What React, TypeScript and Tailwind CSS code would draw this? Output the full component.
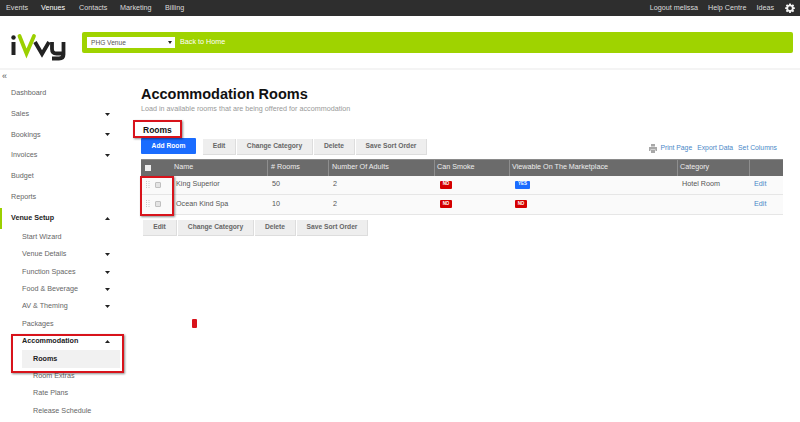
import React from "react";

const Caret = ({ up, small }: { up?: boolean; small?: boolean }) => (
  <svg width={small ? 4 : 5} height={small ? 3 : 3} viewBox="0 0 6 4" preserveAspectRatio="none" className="shrink-0">
    <path d={up ? "M0 4L3 0L6 4Z" : "M0 0L6 0L3 4Z"} fill="#222" />
  </svg>
);

const Gear = () => (
  <svg width="10" height="10" viewBox="0 0 24 24" fill="#f2f2f2">
    <path fillRule="evenodd" d="M10 1h4l.6 3.1 1.8.8L19 3l3 3-1.9 2.6.8 1.8L24 11v3l-3.1.6-.8 1.8L22 19l-3 3-2.6-1.9-1.8.8L14 24h-4l-.6-3.1-1.8-.8L5 22l-3-3 1.9-2.6-.8-1.8L0 14v-3l3.1-.6.8-1.8L2 6l3-3 2.6 1.9 1.8-.8L10 1zm2 7a4.5 4.5 0 1 0 0 9 4.5 4.5 0 0 0 0-9z" />
  </svg>
);

const Logo = () => (
  <svg width="58" height="28" viewBox="0 0 58 28" className="shrink-0">
    <circle cx="2.5" cy="4.5" r="2.2" fill="#222" />
    <path d="M2.5 9V22" stroke="#222" strokeWidth="4" fill="none" />
    <path d="M8.5 3L15.5 20.5L23 3" stroke="#9bd000" strokeWidth="3.8" strokeLinecap="round" fill="none" />
    <path d="M24 9L31 21L38 9" stroke="#222" strokeWidth="3.8" fill="none" />
    <path d="M41 9V16Q41 20.5 45.5 20.5H52.5M52.5 9V21.5Q52.5 25.5 48 25.5H41" stroke="#222" strokeWidth="3.8" fill="none" />
  </svg>
);

const NavRow = ({
  label, h, indent, bold, caret, activeBar, selected,
}: {
  label: string; h: string; indent: string; bold?: boolean; caret?: "up" | "down"; activeBar?: boolean; selected?: boolean;
}) => (
  <div className={`flex items-center ${h} ${indent} relative`}>
    {activeBar && <div className="absolute left-0 top-0 bottom-0 w-[2px] bg-[#9bd000]" />}
    <div className={`flex flex-1 items-center h-full ${selected ? "bg-[#f1f1f1] -ml-[11px] pl-[11px] mr-[21px]" : ""}`}>
      <span className={`flex-1 ${bold ? "font-bold text-[#222]" : "text-[#666]"}`}>{label}</span>
      {caret && <span className="flex mr-[31px]"><Caret up={caret === "up"} /></span>}
    </div>
  </div>
);

const Btn = ({ label, w }: { label: string; w: string }) => (
  <button className={`${w} h-[16px] bg-[#eeeeee] border-b border-r border-[#dddddd] text-[6.7px] font-bold text-[#666] flex items-center justify-center`}>{label}</button>
);

const Badge = ({ yes }: { yes?: boolean }) => (
  <span className={`inline-flex items-center justify-center h-[8px] rounded-[1px] text-white font-bold text-[4.5px] ${yes ? "w-[15px] bg-[#1a6cff]" : "w-[12px] bg-[#d40000]"}`}>{yes ? "YES" : "NO"}</span>
);

const Check = () => (
  <span className="block w-[6px] h-[6px] rounded-[1px] border border-[#c0c0c0] bg-[#e4e4e4]" />
);

const Grip = () => (
  <svg width="4" height="8" viewBox="0 0 4 8" fill="#c8c8c8">
    {[0, 2, 4, 6].map((y) => (
      <g key={y}><rect x="0" y={y} width="1" height="1" /><rect x="2.5" y={y} width="1" height="1" /></g>
    ))}
  </svg>
);

const cols = "grid grid-cols-[32px_94px_61px_106px_75px_168px_72px_33px]";

const Row = ({ name, n, yes, cat }: { name: string; n: string; yes?: boolean; cat?: string }) => (
  <div className={`${cols} h-[19.5px] items-center bg-[#fafafa] border-b border-[#e6e6e6] text-[#555]`}>
    <div className="flex items-center gap-[5px] pl-[5px]"><Grip /><Check /></div>
    <div className="pl-[3px]">{name}</div>
    <div className="pl-[5px]">{n}</div>
    <div className="pl-[5px]">2</div>
    <div className="pl-[6px] flex"><Badge /></div>
    <div className="pl-[6px] flex"><Badge yes={yes} /></div>
    <div className="pl-[5px]">{cat}</div>
    <div className="pl-[5px] text-[#4a88c7]">Edit</div>
  </div>
);

const RedBox = ({ cls }: { cls: string }) => (
  <div className={`absolute border-[2px] border-[#d8131b] shadow-[1px_1px_2px_rgba(0,0,0,0.45)] pointer-events-none ${cls}`} />
);

export default function App() {
  return (
    <div className="relative w-[800px] h-[422px] overflow-hidden bg-white text-[7.2px] font-['Liberation_Sans',Arial,sans-serif]">
      {/* top bar */}
      <div className="h-[16px] bg-[#2e2e2e] flex items-center text-[#dcdcdc] pl-[6px] pr-[5px]">
        <span className="w-[35px]">Events</span>
        <span className="relative w-[38px] text-white">
          Venues
          <span className="absolute left-[2px] -top-[4px] w-[30px] h-[1px] bg-[#9bd000]" />
        </span>
        <span className="w-[41px]">Contacts</span>
        <span className="w-[45px]">Marketing</span>
        <span>Billing</span>
        <span className="ml-auto">Logout melissa</span>
        <span className="ml-[10px]">Help Centre</span>
        <span className="ml-[10px]">Ideas</span>
        <span className="ml-[11px]"><Gear /></span>
      </div>
      {/* header */}
      <div className="h-[54px] flex items-center pl-[11px] pr-[7px] border-b-[2px] border-[#f4f4f4]">
        <div className="w-[71px] pt-[9px]"><Logo /></div>
        <div className="flex-1 h-[21px] mt-[1px] rounded-[2px] bg-[#9fd300] flex items-center pl-[5px] text-white">
          <div className="w-[88px] h-[11px] bg-white flex items-center justify-between pl-[4px] pr-[3px] text-[#555] text-[6.6px]">
            PHG Venue
            <Caret small />
          </div>
          <span className="ml-[5px]">Back to Home</span>
        </div>
      </div>
      <div className="flex">
        {/* sidebar */}
        <div className="w-[141px] shrink-0">
          <div className="h-[13px] pl-[2px] pt-[1px] text-[9px] leading-[10px] text-[#555]">«</div>
          <div>
            <NavRow label="Dashboard" h="h-[20.8px]" indent="pl-[11px]" />
            <NavRow label="Sales" h="h-[20.8px]" indent="pl-[11px]" caret="down" />
            <NavRow label="Bookings" h="h-[20.8px]" indent="pl-[11px]" caret="down" />
            <NavRow label="Invoices" h="h-[20.8px]" indent="pl-[11px]" caret="down" />
            <NavRow label="Budget" h="h-[20.8px]" indent="pl-[11px]" />
            <NavRow label="Reports" h="h-[20.8px]" indent="pl-[11px]" />
            <NavRow label="Venue Setup" h="h-[20.8px]" indent="pl-[11px]" bold caret="up" activeBar />
            <NavRow label="Start Wizard" h="h-[17.4px]" indent="pl-[22px]" />
            <NavRow label="Venue Details" h="h-[17.4px]" indent="pl-[22px]" caret="down" />
            <NavRow label="Function Spaces" h="h-[17.4px]" indent="pl-[22px]" caret="down" />
            <NavRow label="Food & Beverage" h="h-[17.4px]" indent="pl-[22px]" caret="down" />
            <NavRow label="AV & Theming" h="h-[17.4px]" indent="pl-[22px]" caret="down" />
            <NavRow label="Packages" h="h-[17.4px]" indent="pl-[22px]" />
            <NavRow label="Accommodation" h="h-[17.4px]" indent="pl-[22px]" bold caret="up" />
            <NavRow label="Rooms" h="h-[17.4px]" indent="pl-[33px]" bold selected />
            <NavRow label="Room Extras" h="h-[17.4px]" indent="pl-[33px]" />
            <NavRow label="Rate Plans" h="h-[17.4px]" indent="pl-[33px]" />
            <NavRow label="Release Schedule" h="h-[17.4px]" indent="pl-[33px]" />
          </div>
        </div>
        {/* main */}
        <div className="w-[642px] pt-[14px]">
          <h1 className="text-[14.5px] leading-[20px] font-bold text-[#111]">Accommodation Rooms</h1>
          <p className="leading-[10px] text-[#999]">Load in available rooms that are being offered for accommodation</p>
          <h2 className="text-[8.5px] leading-[12px] font-bold text-[#111] pl-[2px] mt-[10px]">Rooms</h2>
          <div className="flex items-start h-[21px] mt-[2px]">
            <button className="w-[55px] h-[16px] rounded-[1px] bg-[#1a6cff] text-white text-[6.7px] font-bold">Add Room</button>
            <div className="flex gap-[1px] ml-[7px] mt-[1px]">
              <Btn label="Edit" w="w-[33px]" />
              <Btn label="Change Category" w="w-[76px]" />
              <Btn label="Delete" w="w-[41px]" />
              <Btn label="Save Sort Order" w="w-[71px]" />
            </div>
            <div className="ml-auto mr-[6px] flex items-center gap-[5px] text-[6.8px] text-[#4a88c7] mt-[5px]">
              <span className="flex items-center gap-[3px]">
                <svg width="8" height="9" viewBox="0 0 8 9" fill="#a8a8a8"><path d="M2 0h4v2.5H2zM0 3h8v4H6.5V5.5h-5V7H0zM2 6h4v3H2z" /></svg>
                Print Page
              </span>
              <span>Export Data</span>
              <span>Set Columns</span>
            </div>
          </div>
          <div className={`${cols} h-[16.5px] items-center bg-[#6b6b6b] border-t border-[#8a8a8a] text-[#eeeeee] [&>div]:h-full [&>div]:flex [&>div]:items-center [&>div]:border-l [&>div]:border-[#8e8e8e]`}>
            <div className="pl-[4px] !border-l-0"><span className="block w-[6px] h-[6px] bg-[#eeeeee]" /></div>
            <div className="pl-[1px] !border-l-0">Name</div>
            <div className="pl-[3px]"># Rooms</div>
            <div className="pl-[3px]">Number Of Adults</div>
            <div className="pl-[2px]">Can Smoke</div>
            <div className="pl-[2px]">Viewable On The Marketplace</div>
            <div className="pl-[2px]">Category</div>
            <div />
          </div>
          <Row name="King Superior" n="50" yes cat="Hotel Room" />
          <Row name="Ocean Kind Spa" n="10" />
          <div className="flex gap-[1px] ml-[2px] mt-[5px]">
            <Btn label="Edit" w="w-[34px]" />
            <Btn label="Change Category" w="w-[76px]" />
            <Btn label="Delete" w="w-[41px]" />
            <Btn label="Save Sort Order" w="w-[71px]" />
          </div>
        </div>
      </div>

      {/* annotations over the page */}
      <RedBox cls="left-[133px] top-[120px] w-[49px] h-[18px]" />
      <RedBox cls="left-[140px] top-[176px] w-[34px] h-[40px]" />
      <RedBox cls="left-[11px] top-[334px] w-[113px] h-[39px]" />
      <div className="absolute left-[192px] top-[319px] w-[5px] h-[9px] rounded-[1px] bg-[#d8131b]" />
    </div>
  );
}
